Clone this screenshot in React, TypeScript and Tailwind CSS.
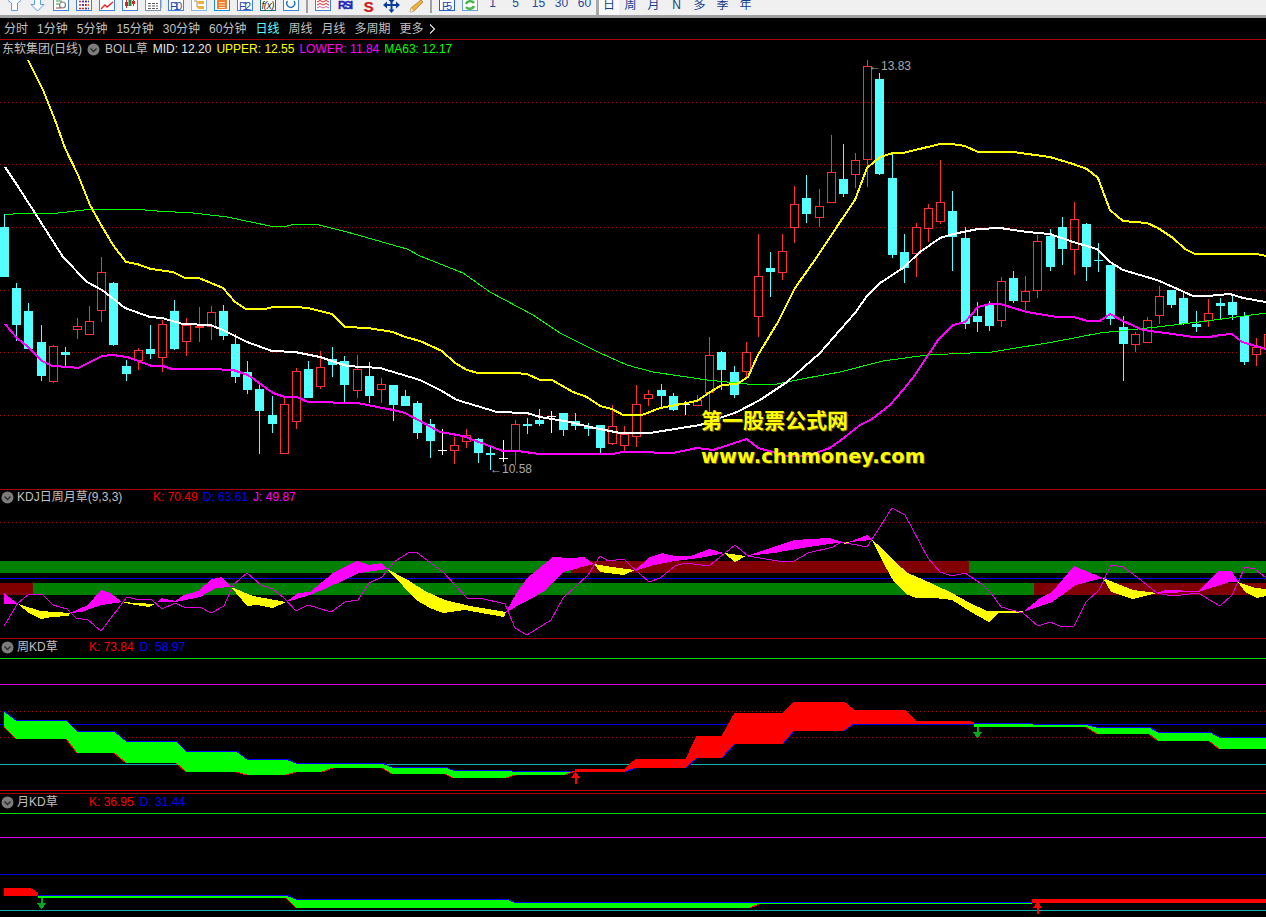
type Pt = [number, number]
type Candle = [number, number, number, number, number, "c" | "r" | "f" | "w" | "x"]

const CANDLES: Candle[] = [
  [4, 214, 227, 277, 277, "c"], [16, 283, 288, 325, 341, "c"], [28, 303, 311, 349, 349, "c"], [41, 325, 342, 376, 381, "c"],
  [53, 345, 346, 382, 383, "r"], [65, 347, 352, 355, 366, "c"], [77, 318, 326, 330, 339, "r"], [89, 306, 321, 335, 335, "r"],
  [101, 257, 272, 311, 322, "r"], [113, 282, 283, 345, 346, "c"], [126, 360, 366, 374, 381, "c"], [138, 348, 350, 361, 370, "r"],
  [150, 325, 349, 354, 359, "c"], [162, 320, 324, 358, 372, "r"], [174, 300, 311, 349, 350, "c"], [186, 318, 325, 342, 356, "r"],
  [199, 307, 326, 328, 342, "f"], [211, 306, 312, 327, 340, "r"], [223, 305, 311, 336, 340, "c"], [235, 334, 344, 377, 383, "c"],
  [247, 361, 372, 390, 394, "c"], [259, 385, 389, 411, 454, "c"], [272, 396, 415, 424, 433, "c"], [284, 396, 404, 454, 454, "r"],
  [296, 368, 371, 422, 429, "r"], [308, 361, 369, 398, 398, "c"], [320, 351, 367, 387, 389, "r"], [332, 347, 359, 365, 377, "c"],
  [344, 356, 361, 385, 402, "c"], [357, 355, 369, 391, 398, "r"], [369, 362, 376, 396, 403, "c"], [381, 378, 384, 390, 403, "r"],
  [393, 385, 385, 405, 421, "c"], [405, 390, 396, 406, 406, "c"], [417, 401, 403, 433, 439, "c"], [430, 419, 424, 441, 458, "c"],
  [442, 429, 450, 450, 455, "w"], [454, 437, 445, 451, 464, "r"], [466, 429, 435, 442, 448, "r"], [478, 438, 439, 453, 463, "c"],
  [490, 445, 453, 455, 470, "c"], [503, 440, 458, 458, 462, "w"], [515, 420, 424, 452, 465, "r"], [527, 418, 424, 426, 434, "c"],
  [539, 409, 420, 424, 426, "c"], [551, 411, 416, 416, 433, "w"], [563, 413, 413, 430, 436, "c"], [575, 413, 421, 426, 430, "c"],
  [588, 423, 426, 429, 436, "c"], [600, 425, 425, 448, 453, "c"], [612, 405, 426, 444, 445, "r"], [624, 426, 434, 446, 451, "r"],
  [636, 385, 404, 437, 447, "r"], [648, 390, 394, 399, 406, "r"], [661, 384, 390, 396, 408, "c"], [673, 393, 396, 410, 411, "c"],
  [685, 401, 404, 404, 415, "w"], [697, 395, 400, 406, 406, "r"], [709, 337, 355, 393, 413, "r"], [721, 351, 352, 370, 390, "c"],
  [734, 366, 372, 395, 398, "c"], [746, 342, 352, 372, 377, "r"], [758, 234, 276, 317, 337, "r"], [770, 252, 268, 272, 297, "c"],
  [782, 234, 251, 273, 280, "r"], [794, 186, 204, 228, 243, "r"], [806, 175, 198, 214, 223, "c"], [819, 189, 206, 218, 227, "r"],
  [831, 135, 172, 203, 203, "r"], [843, 144, 179, 194, 197, "c"], [855, 153, 160, 175, 188, "r"], [867, 60, 66, 160, 187, "r"],
  [879, 73, 79, 174, 175, "c"], [892, 154, 178, 255, 258, "c"], [904, 234, 252, 268, 283, "c"], [916, 223, 227, 254, 277, "r"],
  [928, 204, 208, 229, 242, "r"], [940, 160, 202, 222, 224, "r"], [952, 191, 211, 237, 271, "c"], [965, 227, 238, 324, 329, "c"],
  [977, 302, 316, 322, 332, "c"], [989, 301, 305, 326, 331, "c"], [1001, 277, 281, 321, 327, "r"], [1013, 271, 278, 301, 303, "c"],
  [1025, 276, 291, 302, 310, "r"], [1037, 235, 241, 291, 298, "r"], [1050, 229, 236, 267, 271, "c"], [1062, 217, 227, 249, 265, "c"],
  [1074, 202, 219, 250, 275, "r"], [1086, 223, 224, 267, 281, "c"], [1098, 243, 260, 260, 272, "x"], [1110, 265, 265, 319, 325, "c"],
  [1123, 316, 327, 344, 381, "c"], [1135, 332, 334, 345, 352, "r"], [1147, 317, 320, 343, 343, "r"], [1159, 286, 296, 316, 324, "r"],
  [1171, 290, 290, 305, 308, "c"], [1183, 292, 298, 324, 325, "c"], [1196, 311, 324, 327, 332, "c"], [1208, 299, 313, 321, 327, "r"],
  [1220, 298, 303, 306, 320, "c"], [1232, 295, 302, 315, 320, "c"], [1244, 312, 316, 362, 365, "c"], [1256, 338, 347, 355, 366, "r"],
  [1268, 320, 334, 349, 360, "r"],
]

const UPPER: Pt[] = [[28, 60], [43, 90], [55, 120], [65, 148], [78, 175], [90, 205], [100, 223], [113, 245], [126, 262], [137, 264], [151, 269], [173, 272], [185, 278], [199, 278], [223, 288], [235, 302], [246, 309], [265, 309], [273, 307], [296, 307], [308, 308], [332, 314], [345, 327], [368, 328], [393, 332], [405, 337], [420, 341], [442, 351], [455, 363], [467, 370], [478, 373], [515, 373], [527, 374], [540, 380], [552, 380], [573, 392], [587, 397], [600, 406], [612, 409], [623, 415], [642, 415], [660, 408], [697, 401], [710, 392], [722, 385], [737, 384], [748, 377], [758, 355], [778, 322], [795, 288], [817, 257], [840, 222], [855, 200], [867, 168], [880, 157], [893, 153], [903, 153], [940, 144], [952, 144], [965, 146], [978, 152], [1013, 152], [1050, 157], [1073, 164], [1087, 169], [1098, 178], [1110, 210], [1123, 221], [1147, 223], [1158, 228], [1173, 238], [1185, 249], [1195, 254], [1257, 254], [1266, 256]]
const MID: Pt[] = [[5, 167], [17, 185], [35, 213], [63, 257], [87, 282], [102, 290], [125, 308], [150, 317], [162, 318], [183, 324], [210, 325], [223, 330], [247, 342], [272, 351], [295, 352], [320, 357], [347, 366], [380, 368], [420, 380], [440, 390], [457, 400], [497, 412], [527, 413], [540, 417], [570, 422], [590, 427], [620, 433], [650, 433], [700, 425], [737, 412], [760, 400], [787, 382], [820, 353], [840, 330], [855, 313], [867, 296], [880, 283], [903, 268], [920, 252], [940, 238], [953, 234], [978, 229], [1000, 228], [1027, 232], [1050, 234], [1073, 242], [1097, 249], [1110, 262], [1123, 270], [1157, 280], [1173, 287], [1193, 296], [1207, 296], [1230, 294], [1243, 298], [1266, 302]]
const LOWER: Pt[] = [[5, 324], [17, 338], [28, 347], [42, 361], [52, 366], [70, 367], [78, 368], [102, 356], [113, 355], [127, 357], [152, 366], [163, 366], [172, 369], [210, 369], [233, 370], [248, 375], [273, 393], [285, 397], [297, 397], [308, 402], [357, 403], [393, 410], [405, 413], [420, 421], [440, 432], [463, 436], [492, 447], [503, 451], [517, 451], [540, 454], [612, 454], [623, 452], [635, 452], [673, 453], [697, 448], [713, 450], [747, 439], [758, 448], [787, 456], [807, 456], [830, 448], [845, 437], [860, 425], [872, 419], [890, 405], [903, 390], [915, 375], [938, 340], [953, 325], [965, 322], [978, 307], [990, 304], [1000, 304], [1027, 312], [1057, 317], [1073, 317], [1088, 321], [1100, 321], [1110, 314], [1123, 321], [1143, 330], [1173, 334], [1193, 337], [1210, 337], [1220, 335], [1232, 334], [1242, 342], [1266, 349]]
const MA63: Pt[] = [[5, 215], [22, 213], [58, 213], [93, 209], [133, 209], [157, 211], [193, 213], [227, 217], [270, 226], [287, 226], [295, 224], [315, 224], [347, 232], [407, 249], [420, 256], [463, 273], [490, 292], [533, 315], [560, 333], [600, 353], [627, 365], [653, 372], [707, 380], [747, 384], [777, 384], [807, 378], [840, 372], [883, 361], [927, 355], [992, 352], [1053, 342], [1100, 333], [1157, 327], [1207, 321], [1266, 313]]

const J_LINE: Pt[] = [[4, 626], [18, 603], [29, 594], [42, 594], [53, 605], [67, 609], [76, 618], [88, 620], [101, 631], [127, 597], [135, 599], [152, 600], [162, 609], [175, 603], [186, 608], [200, 607], [211, 613], [224, 606], [233, 585], [247, 573], [261, 585], [273, 589], [284, 598], [296, 611], [308, 605], [331, 612], [345, 602], [358, 600], [369, 583], [382, 577], [394, 562], [408, 553], [416, 552], [443, 572], [467, 598], [480, 598], [505, 604], [515, 628], [527, 635], [551, 620], [563, 598], [588, 575], [600, 556], [608, 561], [624, 559], [630, 565], [649, 582], [660, 578], [675, 566], [685, 563], [709, 566], [725, 553], [735, 545], [748, 556], [772, 560], [784, 562], [794, 561], [808, 553], [833, 547], [841, 542], [867, 547], [892, 508], [905, 515], [928, 558], [940, 572], [952, 576], [965, 573], [983, 585], [991, 593], [1001, 607], [1023, 613], [1038, 626], [1050, 622], [1062, 627], [1074, 626], [1086, 602], [1099, 590], [1111, 565], [1123, 567], [1137, 577], [1157, 593], [1172, 596], [1198, 593], [1220, 606], [1232, 595], [1245, 567], [1255, 569], [1266, 578]]

// [fill, upper edge, lower edge]
const KD_RIBBONS: [string, Pt[], Pt[]][] = [
  ["#ff00ff", [[4, 593], [18, 604]], [[4, 604]]],
  ["#ffff00", [[18, 604], [41, 611], [70, 613]], [[29, 613], [41, 619], [51, 617], [69, 616]]],
  ["#ff00ff", [[70, 613], [88, 605], [101, 590], [110, 593], [122, 602]], [[82, 612], [92, 608], [102, 605]]],
  ["#ffff00", [[122, 602], [137, 603], [155, 604]], [[135, 605], [149, 607]]],
  ["#ff00ff", [[155, 604], [161, 598], [175, 601], [184, 595], [198, 591], [212, 579], [222, 577], [231, 587]], [[157, 602], [175, 602], [200, 597], [216, 588]]],
  ["#ffff00", [[231, 587], [253, 596], [286, 602]], [[247, 606], [257, 605], [273, 608]]],
  ["#ff00ff", [[286, 602], [298, 593], [310, 592], [333, 573], [357, 561], [369, 565], [382, 563], [387, 569]], [[310, 595], [327, 588], [359, 573]]],
  ["#ffff00", [[387, 569], [408, 580], [425, 591], [445, 600], [470, 606], [506, 612]], [[403, 586], [416, 600], [430, 608], [443, 613], [465, 610], [504, 617]]],
  ["#ff00ff", [[506, 612], [516, 594], [527, 578], [553, 557], [571, 558], [584, 557], [594, 564]], [[525, 602], [543, 592], [563, 572]]],
  ["#ffff00", [[594, 564], [612, 567], [635, 570]], [[600, 572], [624, 575]]],
  ["#ff00ff", [[634, 571], [650, 557], [662, 553], [675, 556], [691, 556], [709, 549], [724, 553]], [[654, 565], [675, 561], [699, 558]]],
  ["#ffff00", [[724, 553], [746, 556]], [[735, 562]]],
  ["#ff00ff", [[746, 556], [774, 547], [794, 540], [829, 538], [843, 542]], [[774, 553], [808, 547]]],
  ["#ffff00", [[839, 542], [850, 542]], [[845, 544]]],
  ["#ff00ff", [[849, 542], [867, 535], [872, 540]], [[860, 541]]],
  ["#ffff00", [[872, 540], [882, 548], [895, 562], [908, 573], [922, 579], [950, 592], [970, 603], [987, 611], [1023, 611]], [[885, 566], [894, 582], [906, 594], [916, 598], [934, 598], [952, 600], [971, 612], [989, 622], [999, 613], [1023, 613]]],
  ["#ff00ff", [[1023, 612], [1040, 598], [1052, 592], [1074, 566], [1103, 578]], [[1040, 606], [1052, 602], [1076, 585]]],
  ["#ffff00", [[1103, 578], [1133, 590], [1157, 593]], [[1111, 592], [1133, 599]]],
  ["#ff00ff", [[1157, 593], [1165, 590], [1198, 591], [1218, 571], [1232, 571], [1238, 582]], [[1198, 592], [1230, 582]]],
  ["#ffff00", [[1238, 582], [1255, 588], [1266, 589]], [[1245, 592], [1257, 598], [1266, 596]]],
]

const toPoints = (pts: Pt[]) => pts.map(([x, y]) => `${x},${y}`).join(" ")
const ribbon = (top: Pt[], bottom: Pt[]) => toPoints([...top, ...[...bottom].reverse()])

function Candles() {
  return (
    <>
      {CANDLES.map(([x, high, top, bottom, low, kind]) => {
        const mid = x + 0.5
        if (kind === "w" || kind === "x") {
          const color = kind === "w" ? "#ffffff" : "#54ffff"
          return (
            <g key={x} stroke={color}>
              <line x1={mid} x2={mid} y1={high} y2={low} />
              <line x1={x - 4} x2={x + 5} y1={top + 0.5} y2={top + 0.5} />
            </g>
          )
        }
        if (kind === "c") {
          return (
            <g key={x}>
              <line x1={mid} x2={mid} y1={high} y2={low} stroke="#54ffff" />
              <rect x={x - 4} y={top} width={9} height={bottom - top} fill="#54ffff" />
            </g>
          )
        }
        return (
          <g key={x} stroke="#ff3232">
            <line x1={mid} x2={mid} y1={high} y2={top} />
            <line x1={mid} x2={mid} y1={bottom} y2={low} />
            <rect x={x - 3.5} y={top + 0.5} width={8} height={bottom - top - 1} fill={kind === "f" ? "#ff3232" : "none"} />
          </g>
        )
      })}
    </>
  )
}

function HLine({ y, color, dotted }: { y: number; color: string; dotted?: boolean }) {
  return <line x1={0} x2={1266} y1={y + 0.5} y2={y + 0.5} stroke={color} strokeDasharray={dotted ? "1 3" : undefined} />
}

function CollapseDot() {
  return (
    <svg width="13" height="13" viewBox="0 0 13 13" className="shrink-0">
      <circle cx="6.5" cy="6.5" r="6" fill="#7c7c7c" />
      <path d="M3.5 5.5L6.5 8.5L9.5 5.5" fill="none" stroke="#2a2a2a" strokeWidth="1.4" />
    </svg>
  )
}

function Panel({ top, height, title, children, svg }: { top: number; height: number; title: React.ReactNode; children?: React.ReactNode; svg: React.ReactNode }) {
  return (
    <section className="relative shrink-0 border-t border-[#a80000] overflow-hidden" style={{ height }}>
      <svg className="absolute left-0 top-0" width="1266" height={height - 1} viewBox={`0 ${top + 1} 1266 ${height - 1}`} shapeRendering="crispEdges">
        {svg}
      </svg>
      {title}
      {children}
    </section>
  )
}

const boxPath = "M4.5 0V10.5H19.5V0"

function Icon({ children, box = "#3f7fe0" }: { children?: React.ReactNode; box?: string | null }) {
  return (
    <svg width="23" height="15" viewBox="0 0 23 15" className="shrink-0" fontFamily='"Liberation Sans", sans-serif'>
      {box && <path d={boxPath} fill="#ffffff" stroke={box} shapeRendering="crispEdges" />}
      {children}
    </svg>
  )
}

function Sep({ wide }: { wide?: boolean }) {
  return <div className={wide ? "w-[3px] h-[15px] bg-[#a8a8a8] shrink-0" : "w-[9px] h-[15px] shrink-0 flex justify-center"}>{!wide && <div className="w-[2px] h-[13px] bg-[#a0a0a0]" />}</div>
}

function TextSlot({ label, cjk }: { label: string; cjk?: boolean }) {
  return (
    <div className={`w-[23px] h-[15px] shrink-0 flex items-end justify-center text-[12px] leading-[12px] ${cjk ? "pb-[4px] text-[#153c8c]" : "pb-[6px] text-[#1f4a9c]"}`}>
      {label}
    </div>
  )
}

function Toolbar() {
  return (
    <div className="h-[18px] bg-[#f0f0f0] border-b-[3px] border-[#a0a0a0] overflow-hidden flex pl-[3px] font-['Liberation_Sans','Noto_Sans_CJK_SC',sans-serif]">
      <Icon box={null}>
        <path d="M5 0.5L8.5 3V10.5H14.5V3L18 0.5" fill="#ffffff" stroke="#5b9be8" />
      </Icon>
      <Icon box={null}>
        <path d="M8.5 0V4.5H5L11.5 11L18 4.5H14.5V0" fill="#ffffff" stroke="#5b9be8" />
      </Icon>
      <Icon>
        <path d="M7 1H13M7 4H10" stroke="#3a9a4a" strokeWidth="1.2" />
        <circle cx="13.5" cy="5" r="3" fill="none" stroke="#808080" strokeWidth="1.2" />
        <path d="M7 8H12" stroke="#a04040" />
      </Icon>
      <Icon>
        <path d="M7 1.5H17M7 5H17M7 8.5H17" stroke="#e02020" strokeWidth="1.6" strokeDasharray="2 1" />
        <path d="M10 1.5H17M10 5H14M13 8.5H17" stroke="#2040d0" strokeWidth="1.6" strokeDasharray="2 1" />
      </Icon>
      <Icon>
        <path d="M6 9L10 5L12 7L18 2" fill="none" stroke="#e82020" strokeWidth="1.3" />
      </Icon>
      <Icon>
        <path d="M8.5 0V8M15.5 0V6" stroke="#e02020" />
        <path d="M7 2H10V6H7ZM14 1H17V4H14Z" fill="#e02020" />
        <path d="M12 0V6" stroke="#109040" strokeWidth="3" />
      </Icon>
      <Icon box="#7c8fb0">
        <path d="M7 3.5H17M7 6H17M7 8.5H17" stroke="#606060" strokeDasharray="3 1" />
        <path d="M20 8V0" stroke="#5b9be8" />
      </Icon>
      <Icon>
        <text x="12" y="9.5" fontSize="11" textAnchor="middle" fill="#1f4fb0" textLength="12">F10</text>
      </Icon>
      <Icon box="#8ab4e8">
        <path d="M7 1H10V7H16" fill="none" stroke="#909090" />
        <path d="M11 1H17V4H11ZM11 6H17V9H11Z" fill="#f0b030" />
      </Icon>
      <Icon box="#1090e0">
        <rect x="7" y="0" width="10" height="9" fill="#f08030" />
        <path d="M9 2.5H15M9 5H15M9 7.5H15" stroke="#ffe0c0" />
      </Icon>
      <Icon>
        <text x="12" y="9.5" fontSize="11" textAnchor="middle" fill="#1f4fb0" textLength="12">F12</text>
      </Icon>
      <Icon box="#107878">
        <text x="12" y="9" fontSize="10" textAnchor="middle" fill="#303030" fontStyle="italic" textLength="13">f(x)</text>
      </Icon>
      <Icon>
        <path d="M8.5 1A4 4 0 1 0 15 1" fill="none" stroke="#1f70c0" strokeWidth="1.4" />
      </Icon>
      <Sep />
      <Icon>
        <path d="M6 2L9 0.5L12 2L15 0.5L18 2M6 5L9 3.5L12 5L15 3.5L18 5" fill="none" stroke="#e02020" />
        <path d="M6 8L9 6.5L12 8L15 6.5L18 8" fill="none" stroke="#d060a0" />
      </Icon>
      <Icon box={null}>
        <text x="11.5" y="9" fontSize="11" fontWeight="700" textAnchor="middle" fill="#2424b8" textLength="15" stroke="#2424b8" strokeWidth="0.3">RSI</text>
      </Icon>
      <Icon box={null}>
        <text x="12.2" y="12.2" fontSize="15" fontWeight="700" textAnchor="middle" fill="#a8a8a8">S</text>
        <text x="11.5" y="11.5" fontSize="15" fontWeight="700" textAnchor="middle" fill="#d81818">S</text>
      </Icon>
      <Icon box={null}>
        <path d="M3 5L7 1.5V8.5ZM20 5L16 1.5V8.5ZM11.5 13L8.5 9.5H14.5ZM8.5 0H14.5L11.5 3Z" fill="#0a3ca0" />
        <path d="M7 5H16M11.5 0V10" stroke="#0a3ca0" strokeWidth="2" />
      </Icon>
      <Icon box={null}>
        <path d="M18 0L20 2L11 11L7 12L8 8Z" fill="#f0b040" stroke="#a07020" strokeWidth="0.7" />
        <path d="M7 12L8 8L11 11Z" fill="#f0e0c0" />
      </Icon>
      <Sep />
      <Icon box="#1f60d0">
        <text x="12" y="9.5" fontSize="11" textAnchor="middle" fill="#1f4fb0" textLength="10">F5</text>
      </Icon>
      <Icon box="#6a9fe0">
        <path d="M8 4A4.5 4 0 0 1 16 3M16 6A4.5 4 0 0 1 8 7" fill="none" stroke="#48b848" strokeWidth="2.4" />
      </Icon>
      {["1", "5", "15", "30", "60"].map((n) => (
        <TextSlot key={n} label={n} />
      ))}
      <Sep wide />
      <div className="w-[20px] h-[15px] shrink-0 bg-[#fafafa] flex items-end justify-center pb-[4px] text-[12px] leading-[12px] text-[#153c8c]">日</div>
      {["周", "月", "N", "多", "季", "年"].map((n) => (
        <TextSlot key={n} label={n} cjk />
      ))}
    </div>
  )
}

function PeriodBar() {
  const periods = ["分时", "1分钟", "5分钟", "15分钟", "30分钟", "60分钟", "日线", "周线", "月线", "多周期"]
  return (
    <div className="h-[21px] flex items-center gap-[9px] pl-[4px] text-[12px] text-[#c0c0c0]">
      {periods.map((p) => (
        <span key={p} className={p === "日线" ? "text-[#5effff]" : ""}>
          {p}
        </span>
      ))}
      <span className="flex items-center gap-[5px]">
        更多
        <svg width="7" height="10" viewBox="0 0 7 10" shapeRendering="crispEdges">
          <path d="M1 0.5L5.5 5L1 9.5" fill="none" stroke="#c0c0c0" />
        </svg>
      </span>
    </div>
  )
}

function MainChart() {
  return (
    <Panel
      top={39}
      height={450}
      svg={
        <>
          {[102, 164, 227, 290, 352, 415].map((y) => (
            <HLine key={y} y={y} color="#b00000" dotted />
          ))}
          <Candles />
          <polyline points={toPoints(MA63)} fill="none" stroke="#00ff00" />
          <polyline points={toPoints(UPPER)} fill="none" stroke="#ffff00" strokeWidth="2" />
          <polyline points={toPoints(MID)} fill="none" stroke="#ffffff" strokeWidth="2" />
          <polyline points={toPoints(LOWER)} fill="none" stroke="#ff00ff" strokeWidth="2" />
        </>
      }
      title={
        <div className="relative h-[18px] flex items-center gap-[5px] pl-[2px] text-[12px] text-[#c0c0c0]">
          <span>东软集团(日线)</span>
          <CollapseDot />
          <span>BOLL草</span>
          <span className="text-[#e8e8e8]">MID: 12.20</span>
          <span className="text-[#ffff00]">UPPER: 12.55</span>
          <span className="text-[#ff00ff]">LOWER: 11.84</span>
          <span className="text-[#00ff00]">MA63: 12.17</span>
        </div>
      }
    >
      <span className="absolute left-[869px] top-[18px] text-[12px] leading-[16px] text-[#a8a8a8]">←13.83</span>
      <span className="absolute left-[490px] top-[421px] text-[12px] leading-[16px] text-[#a8a8a8]">←10.58</span>
      <span className="absolute left-[701px] top-[365px] text-[21px] leading-[32px] font-bold text-[#ffff00] [text-shadow:1px_1px_0_#6a5a00]">第一股票公式网</span>
      <span className="absolute left-[701px] top-[403px] text-[19.5px] leading-[28px] font-bold text-[#ffff00] font-['DejaVu_Sans',sans-serif] [text-shadow:1px_1px_0_#6a5a00]">www.chnmoney.com</span>
    </Panel>
  )
}

function KdjPanel() {
  return (
    <Panel
      top={489}
      height={149}
      svg={
        <>
          <HLine y={522} color="#b00000" dotted />
          <rect x="0" y="561" width="571" height="12" fill="#008000" />
          <rect x="571" y="561" width="398" height="12" fill="#800000" />
          <rect x="969" y="561" width="297" height="12" fill="#008000" />
          <rect x="0" y="583" width="33" height="12" fill="#800000" />
          <rect x="33" y="583" width="1001" height="12" fill="#008000" />
          <rect x="1034" y="583" width="232" height="12" fill="#800000" />
          <HLine y={578} color="#0000e0" />
          {KD_RIBBONS.map(([fill, top, bottom], i) => (
            <polygon key={i} points={ribbon(top, bottom)} fill={fill} />
          ))}
          <polyline points={toPoints(J_LINE)} fill="none" stroke="#e000e0" />
        </>
      }
      title={
        <div className="relative h-[14px] flex items-center pl-[1px] text-[12px] text-[#c0c0c0]">
          <CollapseDot />
          <span className="ml-[3px] w-[136px]">KDJ日周月草(9,3,3)</span>
          <span className="text-[#ff0000]">K: 70.49</span>
          <span className="ml-[5px] text-[#0000ff]">D: 63.61</span>
          <span className="ml-[5px] text-[#ff00ff]">J: 49.87</span>
        </div>
      }
    />
  )
}

function KdTitle({ name, k, d, height }: { name: string; k: string; d: string; height: string }) {
  return (
    <div className={`relative flex items-center pl-[1px] text-[12px] text-[#c0c0c0] ${height}`}>
      <CollapseDot />
      <span className="ml-[3px] w-[72px]">{name}</span>
      <span className="text-[#ff0000]">K: {k}</span>
      <span className="ml-[6px] text-[#0000ff]">D: {d}</span>
    </div>
  )
}

const WEEK_GREEN_TOP: Pt[] = [[4, 711], [16, 720], [66, 720], [77, 731], [114, 731], [126, 741], [176, 741], [186, 751], [236, 751], [247, 759], [286, 759], [296, 763], [382, 763], [392, 767], [445, 767], [453, 770], [509, 770], [512, 771], [575, 771]]
const WEEK_GREEN_BOTTOM: Pt[] = [[4, 727], [16, 739], [66, 739], [77, 753], [114, 753], [126, 763], [176, 763], [186, 772], [236, 772], [247, 775], [286, 775], [296, 772], [322, 772], [333, 768], [382, 768], [392, 774], [445, 774], [453, 778], [506, 778], [515, 775], [565, 775], [575, 771]]
const WEEK_RED_TOP: Pt[] = [[575, 769], [625, 769], [636, 759], [686, 759], [697, 736], [722, 736], [735, 713], [783, 713], [794, 702], [844, 702], [854, 710], [905, 710], [916, 721], [967, 721], [974, 723]]
const WEEK_RED_BOTTOM: Pt[] = [[575, 772], [625, 772], [636, 768], [686, 768], [697, 758], [722, 758], [735, 744], [783, 744], [794, 731], [844, 731], [854, 724], [967, 724], [974, 725]]
const WEEK_GREEN2_TOP: Pt[] = [[974, 723], [1026, 723], [1032, 724], [1088, 725], [1096, 727], [1149, 727], [1158, 732], [1210, 732], [1219, 737], [1266, 737]]
const WEEK_GREEN2_BOTTOM: Pt[] = [[974, 727], [1086, 727], [1097, 734], [1149, 734], [1158, 741], [1209, 741], [1219, 749], [1266, 749]]

const MONTH_RED_TOP: Pt[] = [[4, 888], [29, 888], [38, 893]]
const MONTH_RED_BOTTOM: Pt[] = [[4, 896], [38, 895]]
const MONTH_GREEN_TOP: Pt[] = [[38, 895], [286, 895], [296, 899], [506, 899], [514, 902], [1032, 902]]
const MONTH_GREEN_BOTTOM: Pt[] = [[38, 898], [286, 898], [296, 908], [750, 908], [759, 904], [1032, 904]]

// the lower edge only shows in its colour where the band is moving, flat runs stay plain
function Band({ top, bottom, fill, topEdge, bottomEdge }: { top: Pt[]; bottom: Pt[]; fill: string; topEdge: string; bottomEdge: string }) {
  return (
    <>
      <polygon points={ribbon(top, bottom)} fill={fill} />
      <polyline points={toPoints(top)} fill="none" stroke={topEdge} />
      {bottom.slice(1).map((p, i) =>
        p[1] !== bottom[i][1] ? <polyline key={i} points={toPoints([bottom[i], p])} fill="none" stroke={bottomEdge} /> : null
      )}
    </>
  )
}

function Arrow({ x, tip, end, up, color }: { x: number; tip: number; end: number; up?: boolean; color: string }) {
  const base = up ? tip + 6 : tip - 6
  return (
    <>
      <line x1={x + 0.5} x2={x + 0.5} y1={base} y2={end} stroke={color} strokeWidth="2" />
      <polygon points={`${x + 0.5},${tip} ${x - 4.5},${base} ${x + 5.5},${base}`} fill={color} />
    </>
  )
}

function WeekPanel() {
  return (
    <Panel
      top={638}
      height={155}
      svg={
        <>
          <HLine y={658} color="#00e000" />
          <HLine y={684} color="#e000e0" />
          <HLine y={711} color="#b00000" dotted />
          <HLine y={724} color="#0000e0" />
          <HLine y={737} color="#b00000" dotted />
          <HLine y={764} color="#10b0b0" />
          <HLine y={790} color="#c80000" />
          <Band top={WEEK_GREEN_TOP} bottom={WEEK_GREEN_BOTTOM} fill="#00ff00" topEdge="#0000ff" bottomEdge="#ff0000" />
          <Band top={WEEK_RED_TOP} bottom={WEEK_RED_BOTTOM} fill="#ff0000" topEdge="#ff0000" bottomEdge="#0000ff" />
          <Band top={WEEK_GREEN2_TOP} bottom={WEEK_GREEN2_BOTTOM} fill="#00ff00" topEdge="#0000ff" bottomEdge="#ff0000" />
          <Arrow x={575} tip={772} end={784} up color="#ff0000" />
          <Arrow x={977} tip={738} end={727} color="#00a820" />
        </>
      }
      title={<KdTitle name="周KD草" k="73.84" d="58.97" height="h-[16px]" />}
    />
  )
}

function MonthPanel() {
  return (
    <Panel
      top={793}
      height={124}
      svg={
        <>
          <HLine y={813} color="#00e000" />
          <HLine y={837} color="#e000e0" />
          <HLine y={874} color="#0000e0" />
          <HLine y={910} color="#10b0b0" />
          <Band top={MONTH_RED_TOP} bottom={MONTH_RED_BOTTOM} fill="#ff0000" topEdge="#ff0000" bottomEdge="#ff0000" />
          <Band top={MONTH_GREEN_TOP} bottom={MONTH_GREEN_BOTTOM} fill="#00ff00" topEdge="#0000ff" bottomEdge="#ff0000" />
          <rect x="1032" y="899" width="234" height="4" fill="#ff0000" />
          <Arrow x={41} tip={909} end={898} color="#00a820" />
          <Arrow x={1037} tip={902} end={914} up color="#ff0000" />
        </>
      }
      title={<KdTitle name="月KD草" k="36.95" d="31.44" height="h-[16px]" />}
    />
  )
}

export default function App() {
  return (
    <div className="w-[1266px] h-[917px] overflow-hidden bg-black flex flex-col font-['Liberation_Sans','Noto_Sans_CJK_SC',sans-serif]">
      <Toolbar />
      <PeriodBar />
      <MainChart />
      <KdjPanel />
      <WeekPanel />
      <MonthPanel />
    </div>
  )
}
